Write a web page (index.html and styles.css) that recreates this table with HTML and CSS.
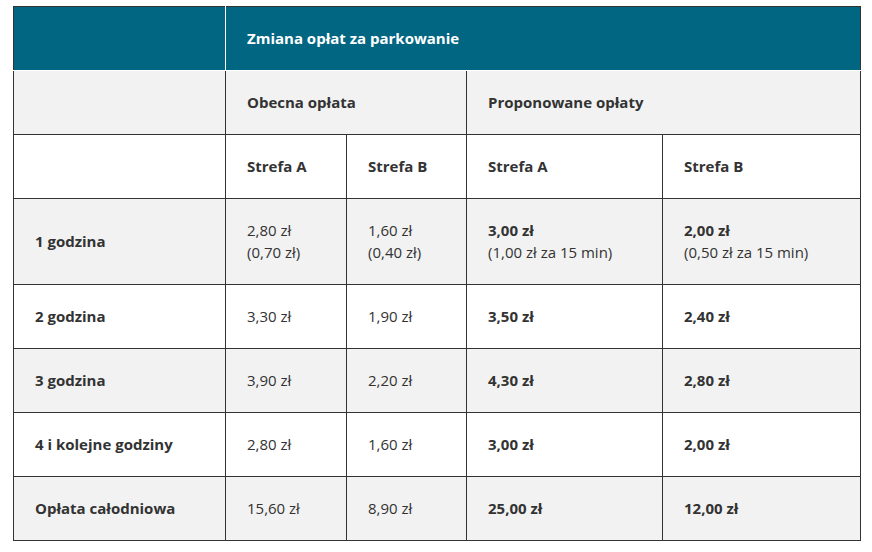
FILE: index.html
```html
<!DOCTYPE html>
<html lang="pl">
<head>
<meta charset="utf-8">
<link rel="stylesheet" href="styles.css">
</head>
<body>
<table class="fees">
  <colgroup>
    <col class="c1"><col class="c2"><col class="c3"><col class="c4"><col class="c5">
  </colgroup>
  <tr class="head">
    <th class="blank"></th>
    <th colspan="4">Zmiana opłat za parkowanie</th>
  </tr>
  <tr class="shade">
    <td></td>
    <td colspan="2" class="b">Obecna opłata</td>
    <td colspan="2" class="b">Proponowane opłaty</td>
  </tr>
  <tr>
    <td></td>
    <td class="b">Strefa A</td>
    <td class="b">Strefa B</td>
    <td class="b">Strefa A</td>
    <td class="b">Strefa B</td>
  </tr>
  <tr class="shade">
    <td class="b">1 godzina</td>
    <td>2,80 zł<br>(0,70 zł)</td>
    <td>1,60 zł<br>(0,40 zł)</td>
    <td><span class="b">3,00 zł</span><br>(1,00 zł za 15 min)</td>
    <td><span class="b">2,00 zł</span><br>(0,50 zł za 15 min)</td>
  </tr>
  <tr>
    <td class="b">2 godzina</td>
    <td>3,30 zł</td>
    <td>1,90 zł</td>
    <td class="b">3,50 zł</td>
    <td class="b">2,40 zł</td>
  </tr>
  <tr class="shade">
    <td class="b">3 godzina</td>
    <td>3,90 zł</td>
    <td>2,20 zł</td>
    <td class="b">4,30 zł</td>
    <td class="b">2,80 zł</td>
  </tr>
  <tr>
    <td class="b">4 i kolejne godziny</td>
    <td>2,80 zł</td>
    <td>1,60 zł</td>
    <td class="b">3,00 zł</td>
    <td class="b">2,00 zł</td>
  </tr>
  <tr class="shade">
    <td class="b">Opłata całodniowa</td>
    <td>15,60 zł</td>
    <td>8,90 zł</td>
    <td class="b">25,00 zł</td>
    <td class="b">12,00 zł</td>
  </tr>
</table>
</body>
</html>
```
FILE: styles.css
```css
html, body {
  margin: 0;
  padding: 0;
  background: #ffffff;
}
body {
  padding: 6px 0 0 13px;
  font-family: "Open Sans", "Noto Sans", sans-serif;
  font-size: 15px;
  line-height: 22px;
  color: #333333;
}
.fees {
  border-collapse: collapse;
  table-layout: fixed;
  width: 847px;
}
.c1 { width: 212px; }
.c2 { width: 121px; }
.c3 { width: 120px; }
.c4 { width: 196px; }
.c5 { width: 198px; }
.fees td, .fees th {
  border: 1px solid #333333;
  padding: 20px 20px 21px 21px;
  text-align: left;
  vertical-align: middle;
}
.head th {
  background: #006682;
  color: #ffffff;
  font-weight: 700;
  border-top-color: #333333;
  border-bottom-color: #ffffff;
}
.head th.blank {
  border-right-color: #ffffff;
}
.head th + th {
  border-left-color: #ffffff;
}
.shade td {
  background: #f2f2f2;
}
.b {
  font-weight: 700;
}
```
